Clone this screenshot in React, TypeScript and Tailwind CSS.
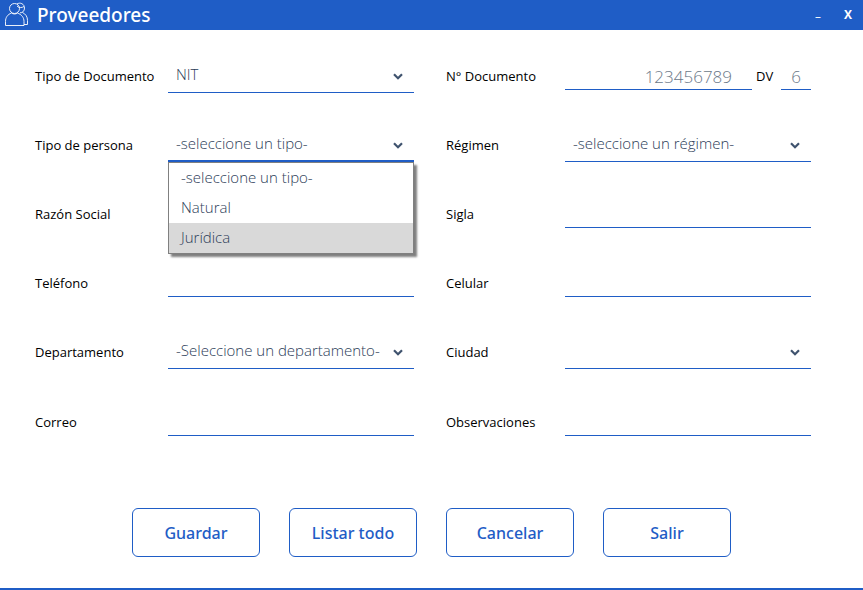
import type { ReactNode } from "react";

const lineBase =
  "w-full min-w-0 rounded-none border-0 border-b border-[#1f5dc6] bg-transparent font-light outline-none";

function Label({ htmlFor, right, children }: { htmlFor: string; right?: boolean; children: ReactNode }) {
  return (
    <label htmlFor={htmlFor} className={`pb-0.5 text-[13px] leading-5 text-black ${right ? "pl-8" : ""}`}>
      {children}
    </label>
  );
}

function Chevron() {
  return (
    <svg
      viewBox="0 0 10 7"
      className="pointer-events-none absolute top-[13px] right-[11px] h-[7px] w-[10px]"
      fill="none"
      stroke="#3f536e"
      strokeWidth="2.2"
      aria-hidden="true"
    >
      <path d="M1 1.2 L5 5.2 L9 1.2" />
    </svg>
  );
}

function SelectField({
  id,
  options,
  open,
  children,
}: {
  id: string;
  options: string[];
  open?: boolean;
  children?: ReactNode;
}) {
  return (
    <div className="relative">
      <select
        id={id}
        defaultValue={options[0]}
        className={`${lineBase} block h-[33px] appearance-none px-2 text-[15px] text-[#2c3c58] ${open ? "border-b-2 pb-[3px]" : "pb-1"}`}
      >
        {options.map((o) => (
          <option key={o}>{o}</option>
        ))}
      </select>
      <Chevron />
      {children}
    </div>
  );
}

function TextField({ id }: { id: string }) {
  return <input id={id} type="text" className={`${lineBase} h-[27px] px-2 text-[15px] text-[#2c3c58]`} />;
}

const personTypes = ["-seleccione un tipo-", "Natural", "Jurídica"];
const actions = ["Guardar", "Listar todo", "Cancelar", "Salir"];

export default function App() {
  return (
    <div className="flex min-h-screen flex-col border-b-2 border-[#1f5dc6] bg-white font-['Open_Sans','Noto_Sans',sans-serif]">
      <header className="flex h-[30px] items-center bg-[#1f5dc6] pl-1 text-white">
        <svg
          viewBox="0 0 24 26"
          className="h-[26px] w-6 shrink-0"
          fill="none"
          stroke="white"
          strokeWidth="0.9"
          aria-hidden="true"
        >
          <circle cx="10.5" cy="6.5" r="5" />
          <path d="M13 2 C16 0 20.5 1.8 20.5 6 C20.5 9 18.5 11 16 10.8 M13 4 C14.5 6 18 6 20 4.5" />
          <path d="M7.5 11 C3.5 12.5 1.5 15.5 1.5 19.5 V23.5 H20 V19.5 C20 15.5 17.5 12.5 13.5 11 C12 12.3 9 12.3 7.5 11 Z" />
          <path d="M18.5 10.5 C21.5 12 23.5 14.5 23.5 18.5 V22.5 H20" />
        </svg>
        <h1 className="ml-[9px] flex-1 font-['Noto_Sans',sans-serif] text-[19px] leading-[30px] font-medium">
          Proveedores
        </h1>
        <button type="button" aria-label="Minimizar" className="flex h-[30px] w-[30px] items-center justify-center pb-1.5 text-xs font-bold">
          _
        </button>
        <button type="button" aria-label="Cerrar" className="flex h-[30px] w-[30px] items-center justify-center text-xs font-bold">
          X
        </button>
      </header>

      <form className="flex flex-1 flex-col pt-3" onSubmit={(e) => e.preventDefault()}>
        <div className="grid grid-cols-[133px_1fr_151px_1fr] grid-rows-[repeat(5,69px)_71px] items-center pr-[52px] pl-[35px]">
          <Label htmlFor="tipoDocumento">Tipo de Documento</Label>
          <SelectField id="tipoDocumento" options={["NIT"]} />
          <Label htmlFor="documento" right>N° Documento</Label>
          <div className="flex items-center">
            <input
              id="documento"
              type="text"
              placeholder="123456789"
              className={`${lineBase} h-[27px] flex-1 pr-5 text-right text-[17px] placeholder:text-[#6b7888]`}
            />
            <label htmlFor="dv" className="w-[29px] pb-0.5 pl-1 text-[13px] leading-5 text-black">DV</label>
            <div className="w-[30px]">
              <input
                id="dv"
                type="text"
                placeholder="6"
                className={`${lineBase} block h-[27px] text-center text-[17px] placeholder:text-[#6b7888]`}
              />
            </div>
          </div>

          <Label htmlFor="tipoPersona">Tipo de persona</Label>
          <SelectField id="tipoPersona" options={personTypes} open>
            <ul
              role="listbox"
              aria-label="Tipo de persona"
              className="absolute top-full left-0 z-10 w-full border border-[#808080] bg-white shadow-[3px_3px_2px_rgba(0,0,0,0.5)]"
            >
              {personTypes.map((t, i) => (
                <li
                  key={t}
                  role="option"
                  aria-selected={i === 2}
                  className={`h-[30px] px-3 text-[15px] leading-7 font-light text-[#2c3c58] ${i === 2 ? "bg-[#d9d9d9]" : ""}`}
                >
                  {t}
                </li>
              ))}
            </ul>
          </SelectField>
          <Label htmlFor="regimen" right>Régimen</Label>
          <SelectField id="regimen" options={["-seleccione un régimen-"]} />

          <Label htmlFor="razon">Razón Social</Label>
          <TextField id="razon" />
          <Label htmlFor="sigla" right>Sigla</Label>
          <TextField id="sigla" />

          <Label htmlFor="telefono">Teléfono</Label>
          <TextField id="telefono" />
          <Label htmlFor="celular" right>Celular</Label>
          <TextField id="celular" />

          <Label htmlFor="departamento">Departamento</Label>
          <SelectField id="departamento" options={["-Seleccione un departamento-"]} />
          <Label htmlFor="ciudad" right>Ciudad</Label>
          <SelectField id="ciudad" options={[""]} />

          <Label htmlFor="correo">Correo</Label>
          <TextField id="correo" />
          <Label htmlFor="observaciones" right>Observaciones</Label>
          <TextField id="observaciones" />
        </div>

        <div className="mt-[50px] mb-[31px] flex justify-center gap-[29px]">
          {actions.map((a) => (
            <button
              key={a}
              type="button"
              className="h-[49px] w-32 rounded-md border border-[#1f5dc6] bg-white font-['Noto_Sans',sans-serif] text-base font-medium text-[#1f5dc6]"
            >
              {a}
            </button>
          ))}
        </div>
      </form>
    </div>
  );
}
